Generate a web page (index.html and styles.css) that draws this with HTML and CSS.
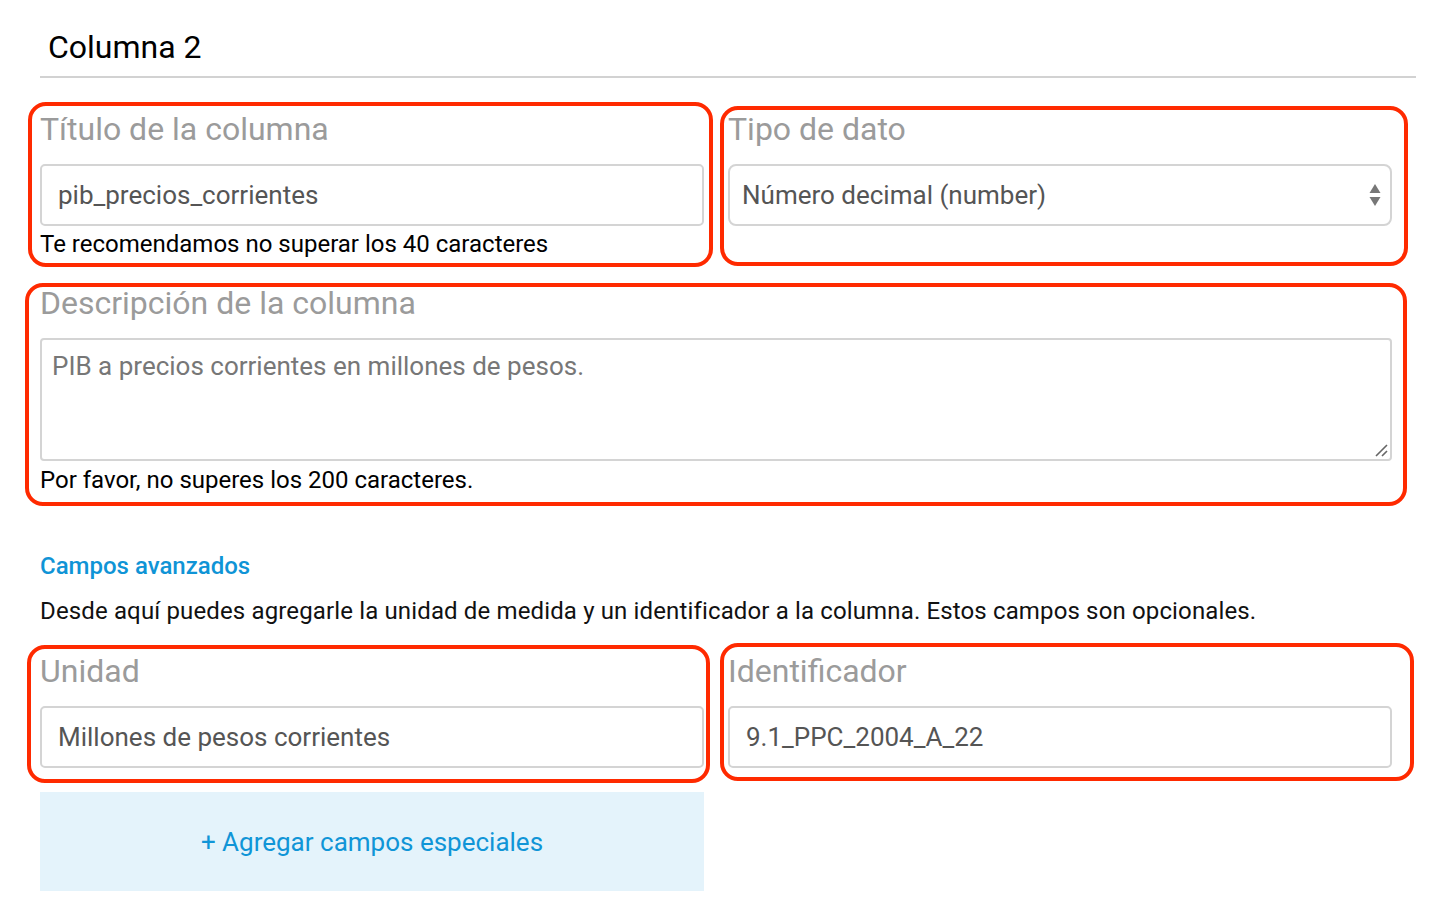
FILE: index.html
```html
<!DOCTYPE html>
<html lang="es">
<head>
<meta charset="utf-8">
<title>Columna 2</title>
<link rel="stylesheet" href="styles.css">
</head>
<body>
<div class="page">
  <div class="header"><h2 class="title">Columna 2</h2></div>

  <div class="row row-top">
    <div class="field mark mark-a">
      <label class="label">Título de la columna</label>
      <div class="input">pib_precios_corrientes</div>
      <p class="help">Te recomendamos no superar los 40 caracteres</p>
    </div>
    <div class="field mark mark-b">
      <label class="label">Tipo de dato</label>
      <div class="input select">
        <span>Número decimal (number)</span>
        <svg class="arrows" width="12" height="24" viewBox="0 0 12 24"><path d="M6 1 L11.5 10 L0.5 10 Z" fill="#777"/><path d="M0.5 14 L11.5 14 L6 23 Z" fill="#777"/></svg>
      </div>
    </div>
  </div>

  <div class="field full mark mark-c">
    <label class="label">Descripción de la columna</label>
    <div class="textarea">PIB a precios corrientes en millones de pesos.
      <svg class="grip" width="14" height="14" viewBox="0 0 14 14"><path d="M2 13 L13 2 M8 13 L13 8" stroke="#666" stroke-width="1.6"/></svg>
    </div>
    <p class="help">Por favor, no superes los 200 caracteres.</p>
  </div>

  <h3 class="adv-title">Campos avanzados</h3>
  <p class="adv-text">Desde aquí puedes agregarle la unidad de medida y un identificador a la columna. Estos campos son opcionales.</p>

  <div class="row row-adv">
    <div class="field mark mark-d">
      <label class="label">Unidad</label>
      <div class="input">Millones de pesos corrientes</div>
    </div>
    <div class="field mark mark-e">
      <label class="label">Identificador</label>
      <div class="input">9.1_PPC_2004_A_22</div>
    </div>
  </div>

  <div class="row">
    <div class="add">+ Agregar campos especiales</div>
  </div>
</div>
</body>
</html>
```

FILE: styles.css
```css
* { box-sizing: border-box; }
body {
  margin: 0;
  background: #fff;
  font-family: Roboto, "Noto Sans", sans-serif;
  color: #000;
}
.page {
  padding: 0 36px 0 40px;
}
.header {
  width: 1376px;
  border-bottom: 2px solid #d2d2d2;
  padding: 27px 0 9px 8px;
}
.title {
  margin: 0;
  font-size: 32px;
  font-weight: 400;
  line-height: 40px;
}
.row {
  display: grid;
  grid-template-columns: 664px 664px;
  column-gap: 24px;
}
.row-top { margin-top: 32px; }
.field { position: relative; }
.full { width: 1352px; margin-top: 26px; }
.label {
  display: block;
  font-size: 32px;
  line-height: 38px;
  color: #9b9b9b;
  font-weight: 400;
}
.input {
  margin-top: 16px;
  height: 62px;
  border: 2px solid #d4d4d4;
  border-radius: 5px;
  padding: 0 16px;
  display: flex;
  align-items: center;
  font-size: 26px;
  color: #555;
}
.select {
  border-radius: 8px;
  padding: 0 8px 0 12px;
  justify-content: space-between;
}
.arrows { margin-right: 1px; }
.help {
  margin: 4px 0 0;
  font-size: 24px;
  line-height: 28px;
  color: #000;
}
.textarea {
  position: relative;
  margin-top: 16px;
  height: 123px;
  border: 2px solid #d4d4d4;
  border-radius: 4px;
  padding: 11px 10px;
  font-size: 26px;
  line-height: 30px;
  color: #777;
}
.full .help { margin-top: 5px; }
.grip { position: absolute; right: 2px; bottom: 2px; }
.adv-title {
  margin: 57px 0 0;
  font-size: 24px;
  line-height: 30px;
  font-weight: 500;
  color: #0f94d6;
}
.adv-text {
  margin: 16px 0 0;
  font-size: 24px;
  line-height: 28px;
  letter-spacing: 0.14px;
  color: #111;
}
.row-adv { margin-top: 27px; }
.add {
  margin-top: 24px;
  height: 99px;
  background: #e4f3fb;
  display: flex;
  align-items: center;
  justify-content: center;
  font-size: 26px;
  color: #1095d7;
}
/* annotation outlines drawn over the fields */
.mark::after {
  content: "";
  position: absolute;
  border: 4px solid #ff2a00;
  border-radius: 18px;
  pointer-events: none;
}
.mark-a::after { left: -12px; top: -8px; right: -9px; bottom: -9px; }
.mark-b::after { left: -8px; top: -4px; right: -16px; bottom: -9px; }
.mark-c::after { left: -15px; top: -1px; right: -15px; bottom: -12px; }
.mark-d::after { left: -13px; top: -7px; right: -6px; bottom: -15px; }
.mark-e::after { left: -8px; top: -9px; right: -22px; bottom: -13px; }
.mark-b { align-self: start; height: 147px; }
```
